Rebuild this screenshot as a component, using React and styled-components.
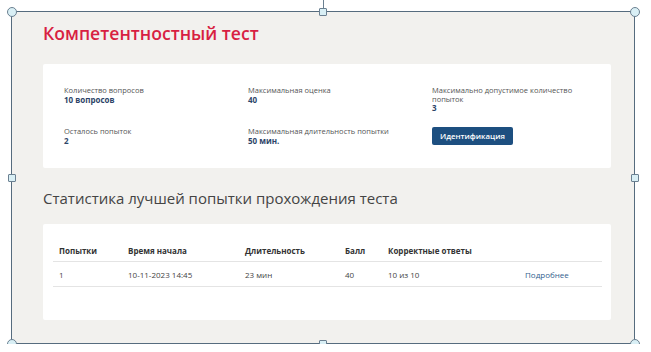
import React from 'react';
import styled, { createGlobalStyle } from 'styled-components';

const Global = createGlobalStyle`
  body {
    margin: 0;
    background: #ffffff;
    font-family: "Open Sans", "Liberation Sans", sans-serif;
  }
`;

const Frame = styled.div`
  position: relative;
  box-sizing: border-box;
  margin: 11px 0 0 11px;
  width: 624px;
  height: 333px;
  border: 1px solid #566c7e;
  background: #f2f1ee;
  padding: 9px 23px 0 31px;
`;

const Handle = styled.span`
  position: absolute;
  left: ${p => p.$x};
  top: ${p => p.$y};
  box-sizing: border-box;
  width: ${p => (p.$round ? 10 : 8)}px;
  height: ${p => (p.$round ? 10 : 8)}px;
  border-radius: ${p => (p.$round ? '50%' : '1px')};
  border: 1px solid #6b8091;
  background: #d9eff5;
  transform: translate(-50%, -50%);
`;

const Stem = styled.span`
  position: absolute;
  left: calc(50% - 0.5px);
  top: -12px;
  width: 1px;
  height: 8px;
  background: #6b8091;
`;

const Title = styled.h1`
  margin: 0;
  font-size: 17.6px;
  line-height: 24px;
  font-weight: 600;
  color: #d81f42;
`;

const Card = styled.div`
  background: #ffffff;
  border-radius: 2px;
  margin-top: ${p => p.$top}px;
`;

const InfoGrid = styled(Card)`
  display: grid;
  grid-template-columns: 184px 184px 1fr;
  row-gap: 15px;
  padding: 22px 0 23px 21px;
`;

const Info = styled.div`
  display: flex;
  flex-direction: column;
  align-items: flex-start;
`;

const Label = styled.span`
  font-size: 7.5px;
  line-height: 8.7px;
  color: #555;
  max-width: ${p => p.$max || 'none'};
`;

const Value = styled.span`
  font-size: 8px;
  line-height: 9px;
  font-weight: 700;
  color: #2d4468;
`;

const Button = styled.button`
  height: 18px;
  padding: 0 8px;
  border: none;
  border-radius: 2px;
  background: #1d4f80;
  color: #fff;
  font-family: inherit;
  font-size: 7.8px;
  font-weight: 600;
`;

const Heading = styled.h2`
  margin: 20px 0 0;
  font-size: 15px;
  line-height: 20px;
  font-weight: 400;
  color: #444;
`;

const TableCard = styled(Card)`
  padding: 16px 9px 33px 10px;
`;

const Table = styled.table`
  width: 100%;
  border-collapse: collapse;
  table-layout: fixed;
  font-size: 8px;
  color: #444;
`;

const Th = styled.th`
  height: 21px;
  padding: 0 0 0 6px;
  text-align: left;
  font-weight: 700;
  color: #333;
  border-bottom: 1px solid #e4e4e4;
`;

const Td = styled.td`
  height: 24px;
  padding: 0 0 0 6px;
  border-bottom: 1px solid #e4e4e4;
  color: ${p => (p.$link ? '#33608e' : '#444')};
`;

const cols = [69, 117, 100, 43, 137];

export default function App() {
  return (
    <>
      <Global />
      <Frame>
        <Title>Компетентностный тест</Title>
        <InfoGrid $top={19}>
          <Info>
            <Label>Количество вопросов</Label>
            <Value>10 вопросов</Value>
          </Info>
          <Info>
            <Label>Максимальная оценка</Label>
            <Value>40</Value>
          </Info>
          <Info>
            <Label $max="150px">Максимально допустимое количество попыток</Label>
            <Value>3</Value>
          </Info>
          <Info>
            <Label>Осталось попыток</Label>
            <Value>2</Value>
          </Info>
          <Info>
            <Label>Максимальная длительность попытки</Label>
            <Value>50 мин.</Value>
          </Info>
          <Info>
            <Button>Идентификация</Button>
          </Info>
        </InfoGrid>
        <Heading>Статистика лучшей попытки прохождения теста</Heading>
        <TableCard $top={16}>
          <Table>
            <colgroup>
              {cols.map((w, i) => <col key={i} style={{ width: w }} />)}
              <col />
            </colgroup>
            <thead>
              <tr>
                <Th>Попытки</Th>
                <Th>Время начала</Th>
                <Th>Длительность</Th>
                <Th>Балл</Th>
                <Th>Корректные ответы</Th>
                <Th></Th>
              </tr>
            </thead>
            <tbody>
              <tr>
                <Td>1</Td>
                <Td>10-11-2023 14:45</Td>
                <Td>23 мин</Td>
                <Td>40</Td>
                <Td>10 из 10</Td>
                <Td $link>Подробнее</Td>
              </tr>
            </tbody>
          </Table>
        </TableCard>
        <Stem />
        <Handle $round $x="-0.5px" $y="-0.5px" />
        <Handle $x="50%" $y="-0.5px" />
        <Handle $round $x="calc(100% + 0.5px)" $y="-0.5px" />
        <Handle $x="-0.5px" $y="50%" />
        <Handle $x="calc(100% + 0.5px)" $y="50%" />
        <Handle $round $x="-0.5px" $y="calc(100% + 0.5px)" />
        <Handle $x="50%" $y="calc(100% + 0.5px)" />
        <Handle $round $x="calc(100% + 0.5px)" $y="calc(100% + 0.5px)" />
      </Frame>
    </>
  );
}
